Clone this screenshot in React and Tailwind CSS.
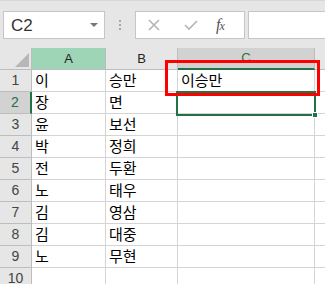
const rows = [
  ["이", "승만", "이승만"],
  ["장", "면", ""],
  ["윤", "보선", ""],
  ["박", "정희", ""],
  ["전", "두환", ""],
  ["노", "태우", ""],
  ["김", "영삼", ""],
  ["김", "대중", ""],
  ["노", "무현", ""],
  ["", "", ""],
];

const kr = { fontFamily: '"Malgun Gothic", "Noto Sans CJK KR", "Liberation Sans", sans-serif' };
const ui = { fontFamily: '"Liberation Sans", Arial, sans-serif' };

function FormulaBar() {
  return (
    <div className="h-[48px] bg-[#e6e6e6] border-t border-[#d6d6d6] flex items-start pt-[10px] pl-[3px]" style={ui}>
      <div className="w-[102px] h-[28px] bg-white border border-[#c6c6c6] flex items-center pl-[7px] pr-[6px]">
        <span className="text-[17px] text-[#333] flex-1 leading-none">C2</span>
        <span className="w-0 h-0 border-l-[4px] border-r-[4px] border-t-[4px] border-l-transparent border-r-transparent border-t-[#777]" />
      </div>
      <div className="w-[30px] flex flex-col items-center gap-[2px] pt-[9px]">
        <span className="w-[2px] h-[2px] bg-[#a6a6a6]" />
        <span className="w-[2px] h-[2px] bg-[#a6a6a6]" />
        <span className="w-[2px] h-[2px] bg-[#a6a6a6]" />
      </div>
      <div className="w-[110px] h-[28px] bg-white border border-[#c6c6c6] flex items-center">
        <svg width="12" height="12" viewBox="0 0 12 12" className="ml-[12px]">
          <path d="M1 1 L11 11 M11 1 L1 11" stroke="#b4b4b4" strokeWidth="1.6" />
        </svg>
        <svg width="14" height="12" viewBox="0 0 14 12" className="ml-[24px]">
          <path d="M1 6 L5 10 L13 2" stroke="#b4b4b4" strokeWidth="1.6" fill="none" />
        </svg>
        <span className="ml-[18px] text-[16px] italic text-[#555] tracking-[-1px]" style={{ fontFamily: '"Liberation Serif", serif' }}>
          f<span className="text-[12px]">x</span>
        </span>
      </div>
      <div className="ml-[3px] flex-1 h-[28px] bg-white border border-[#c6c6c6] border-r-0" />
    </div>
  );
}

export default function App() {
  return (
    <div className="relative w-[325px] h-[284px] overflow-hidden bg-white">
      <FormulaBar />

      <div className="grid grid-cols-[32px_74px_72px_137px_1fr]">
        {/* header row */}
        <div className="h-[22px] bg-[#e6e6e6] border-r border-b border-[#bdbdbd] relative">
          <svg width="14" height="14" viewBox="0 0 14 14" className="absolute right-[2px] bottom-[2px]">
            <path d="M14 0 L14 14 L0 14 Z" fill="#b7b7b7" />
          </svg>
        </div>
        <div className="h-[22px] bg-[#9fd5b7] border-r border-b border-[#bdbdbd] flex items-center justify-center text-[13px] text-[#222]" style={ui}>A</div>
        <div className="h-[22px] bg-[#e6e6e6] border-r border-b border-[#bdbdbd] flex items-center justify-center text-[13px] text-[#222]" style={ui}>B</div>
        <div className="h-[22px] bg-[#d2d2d2] border-r border-[#bdbdbd] border-b-2 border-b-[#217346] flex items-center justify-center text-[13px] text-[#217346]" style={ui}>C</div>
        <div className="h-[22px] bg-[#e6e6e6] border-b border-[#bdbdbd]" />

        {rows.map((r, i) => (
          <div key={i} className="contents">
            <div
              className={
                i === 1
                  ? "h-[22px] bg-[#d2d2d2] border-r-2 border-r-[#217346] border-b border-b-[#bdbdbd] flex items-center justify-center text-[14px] text-[#217346]"
                  : "h-[22px] bg-[#e6e6e6] border-r border-b border-[#bdbdbd] flex items-center justify-center text-[14px] text-[#444]"
              }
              style={ui}
            >
              {i + 1}
            </div>
            <div className="h-[22px] border-r border-b border-[#d4d4d4] flex items-center pl-[3px] text-[15px] text-black" style={kr}>{r[0]}</div>
            <div className="h-[22px] border-r border-b border-[#d4d4d4] flex items-center pl-[3px] text-[15px] text-black" style={kr}>{r[1]}</div>
            <div className="h-[22px] border-r border-b border-[#d4d4d4] flex items-center pl-[3px] text-[15px] text-black" style={kr}>{r[2]}</div>
            <div className="h-[22px] border-b border-[#d4d4d4]" />
          </div>
        ))}
      </div>

      {/* active cell C2 */}
      <div className="absolute left-[176px] top-[91px] w-[140px] h-[25px] border-2 border-[#217346]" />
      <div className="absolute left-[312px] top-[112px] w-[6px] h-[6px] bg-[#217346] border border-white" />

      {/* red highlight */}
      <div className="absolute left-[165px] top-[60px] w-[155px] h-[36px] border-[3px] border-[#ff0000]" />
    </div>
  );
}
